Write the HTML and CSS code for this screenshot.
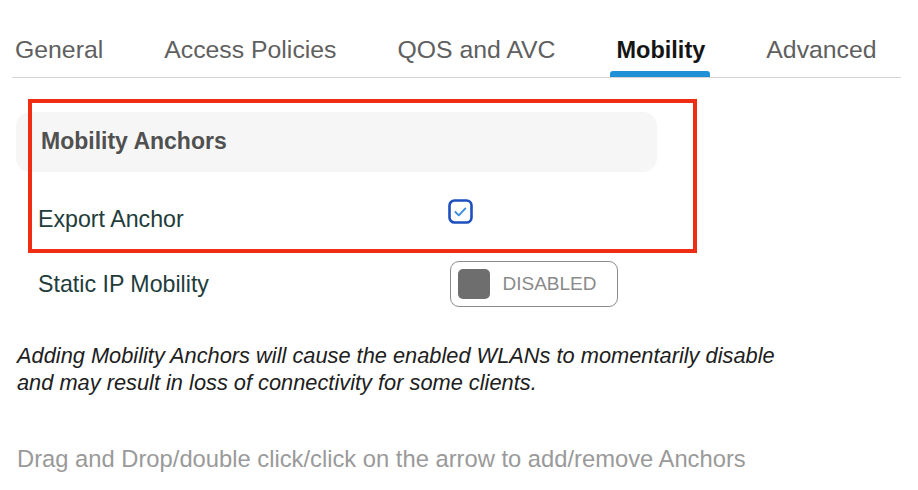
FILE: index.html
```html
<!DOCTYPE html>
<html lang="en">
<head>
<meta charset="utf-8">
<title>Mobility</title>
<link rel="stylesheet" href="styles.css">
</head>
<body>
<div class="page">
  <nav class="tabs">
    <ul class="tab-list">
      <li class="tab">General</li>
      <li class="tab">Access Policies</li>
      <li class="tab">QOS and AVC</li>
      <li class="tab active">Mobility</li>
      <li class="tab">Advanced</li>
    </ul>
  </nav>

  <section class="content">
    <div class="panel-head">Mobility Anchors</div>

    <div class="row row-export">
      <span class="label">Export Anchor</span>
      <span class="checkbox">
        <svg viewBox="0 0 25 25" width="25" height="25" aria-hidden="true">
          <rect x="1.5" y="1.5" width="22" height="22" rx="5" ry="5" fill="#fff" stroke="#1d4fbf" stroke-width="2.6"/>
          <path d="M7.4 13 L10.8 16.4 L17.4 9.4" fill="none" stroke="#3a8ddc" stroke-width="1.9" stroke-linecap="round" stroke-linejoin="round"/>
        </svg>
      </span>
    </div>

    <div class="row row-static">
      <span class="label">Static IP Mobility</span>
      <span class="toggle">
        <span class="toggle-knob"></span>
        <span class="toggle-text">DISABLED</span>
      </span>
    </div>

    <p class="note">Adding Mobility Anchors will cause the enabled WLANs to momentarily disable<br>and may result in loss of connectivity for some clients.</p>

    <p class="hint">Drag and Drop/double click/click on the arrow to add/remove Anchors</p>
  </section>

  <div class="highlight" aria-hidden="true"></div>
</div>
</body>
</html>
```

FILE: styles.css
```css
* { box-sizing: border-box; }

html, body {
  margin: 0;
  padding: 0;
  background: #ffffff;
}

body {
  font-family: "Liberation Sans", Arial, sans-serif;
  width: 918px;
  height: 490px;
  overflow: hidden;
}

.page {
  position: relative;
  width: 918px;
  height: 490px;
  padding-top: 36px;
}

/* Tabs */
.tabs {
  margin: 0 17px 0 12px;
  border-bottom: 1.5px solid #d3d3d3;
}

.tab-list {
  list-style: none;
  margin: 0 0 0 -4px;
  padding: 0;
  display: flex;
  gap: 47px;
}

.tab {
  position: relative;
  font-size: 24.8px;
  line-height: 28px;
  color: #606060;
  padding: 0 7px 13px;
}

.tab.active {
  color: #151515;
  font-weight: 700;
  font-size: 23.5px;
}

.tab.active::after {
  content: "";
  position: absolute;
  left: 0;
  right: 2px;
  bottom: 0;
  height: 6px;
  background: #1f8fd6;
  border-radius: 3px 3px 0 0;
}

/* Content */
.content {
  padding-left: 16px;
}

.panel-head {
  margin-top: 33.5px;
  width: 641px;
  height: 60px;
  border-radius: 14px;
  background: #f6f6f6;
  padding-left: 25px;
  display: flex;
  align-items: center;
  font-size: 23px;
  font-weight: 700;
  color: #505050;
}

.row {
  display: flex;
  align-items: center;
  padding-left: 22px;
}

.label {
  width: 410px;
  font-size: 23.2px;
  line-height: 26px;
  color: #223c3c;
}

.row-export {
  margin-top: 27.5px;
}

.checkbox {
  display: block;
  width: 25px;
  height: 25px;
  margin-bottom: 14px;
}

.checkbox svg {
  display: block;
}

.row-static {
  margin-top: 22.5px;
}

.toggle {
  display: flex;
  align-items: center;
  width: 168px;
  height: 46px;
  margin-left: 2px;
  border: 1.5px solid #8c8c8c;
  border-radius: 9px;
  padding-left: 6.5px;
}

.toggle-knob {
  display: block;
  width: 32px;
  height: 30px;
  border-radius: 5px;
  background: #6e6e6e;
}

.toggle-text {
  margin-left: 13px;
  font-size: 19px;
  color: #8a8a8a;
}

.note {
  margin: 35.6px 0 0 1px;
  font-size: 21.8px;
  line-height: 27px;
  font-style: italic;
  color: #202020;
}

.hint {
  margin: 49px 0 0 1px;
  font-size: 23.75px;
  line-height: 28px;
  color: #9a9a9a;
}

/* Annotation overlay */
.highlight {
  position: absolute;
  left: 28px;
  top: 99px;
  width: 669px;
  height: 154px;
  border: 4px solid #ef2d14;
  pointer-events: none;
}
```
